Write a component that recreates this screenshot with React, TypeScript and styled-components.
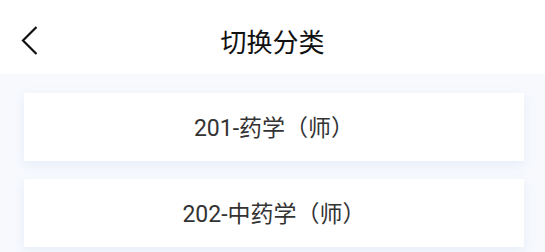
import styled, { createGlobalStyle } from "styled-components";

const GlobalStyle = createGlobalStyle`
  html, body {
    margin: 0;
    padding: 0;
    background: #f7f9fd;
    font-family: Roboto, "Noto Sans CJK SC", sans-serif;
  }
`;

const Page = styled.div`
  width: 545px;
  height: 252px;
  overflow: hidden;
  background: #f7f9fd;
`;

const Header = styled.header`
  position: relative;
  height: 74px;
  background: #ffffff;
  display: flex;
  align-items: center;
  justify-content: center;
`;

const BackButton = styled.button`
  position: absolute;
  left: 20px;
  top: 25px;
  width: 20px;
  height: 32px;
  padding: 0;
  border: none;
  background: transparent;
  display: flex;
  align-items: center;
  justify-content: center;
`;

const Title = styled.h1`
  margin: 0;
  margin-top: 6px;
  font-size: 26px;
  font-weight: 400;
  color: #111111;
`;

const List = styled.div`
  display: flex;
  flex-direction: column;
  gap: 18px;
  padding: 19px 21px 0 24px;
`;

const CategoryCard = styled.div`
  box-sizing: border-box;
  height: 68px;
  padding-bottom: 3px;
  background: #ffffff;
  box-shadow: 0 4px 10px rgba(210, 225, 245, 0.45);
  display: flex;
  align-items: center;
  justify-content: center;
  font-size: 23px;
  color: #333333;
`;

const categories = ["201-药学（师）", "202-中药学（师）"];

const App = () => {
  return (
    <Page>
      <GlobalStyle />
      <Header>
        <BackButton aria-label="返回">
          <svg width="20" height="32" viewBox="0 0 20 32">
            <polyline points="16.5,2 3,15.5 16.5,29" fill="none" stroke="#111" strokeWidth="2.2" />
          </svg>
        </BackButton>
        <Title>切换分类</Title>
      </Header>
      <List>
        {categories.map((name) => (
          <CategoryCard key={name}>{name}</CategoryCard>
        ))}
      </List>
    </Page>
  );
};

export default App;
